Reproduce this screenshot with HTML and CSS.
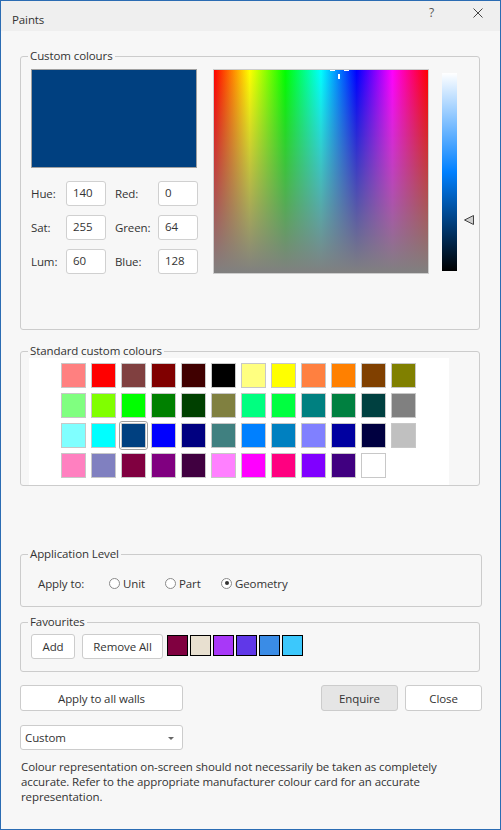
FILE: index.html
```html
<!DOCTYPE html>
<html>
<head>
    <title>Paints</title>
    <link rel="stylesheet" href="styles.css">
</head>
<body>
<div class="window">
    <div class="titlebar">
        <span class="title">Paints</span>
        <span class="caption-help">?</span>
        <span class="caption-close">
            <svg width="10" height="10" viewBox="0 0 10 10"><path d="M0.5 0.5 L9.5 9.5 M9.5 0.5 L0.5 9.5" stroke="#444" stroke-width="1" fill="none"/></svg>
        </span>
    </div>

    <div class="content">
        <fieldset class="group">
            <legend>Custom colours</legend>
            <div class="custom-body">
                <div class="custom-left">
                    <div class="preview"></div>
                    <div class="fields">
                        <label>Hue:</label><input class="num" value="140">
                        <label class="lbl2">Red:</label><input class="num" value="0">
                        <label>Sat:</label><input class="num" value="255">
                        <label class="lbl2">Green:</label><input class="num" value="64">
                        <label>Lum:</label><input class="num" value="60">
                        <label class="lbl2">Blue:</label><input class="num" value="128">
                    </div>
                </div>
                <div class="spectrum">
                    <span class="cross cross-l"></span>
                    <span class="cross cross-r"></span>
                    <span class="cross cross-v"></span>
                </div>
                <div class="lum"></div>
                <div class="lum-arrow">
                    <svg width="11" height="11" viewBox="0 0 11 11"><polygon points="0.5,5 9.5,0.5 9.5,9.5" fill="#cfcfcf" stroke="#444" stroke-width="1"/></svg>
                </div>
            </div>
        </fieldset>

        <fieldset class="group std-group">
            <legend>Standard custom colours</legend>
            <div class="std-panel">
                <div class="swatch-grid">
                    <span class="swatch" style="background:#ff8080"></span>
                    <span class="swatch" style="background:#ff0000"></span>
                    <span class="swatch" style="background:#804040"></span>
                    <span class="swatch" style="background:#800000"></span>
                    <span class="swatch" style="background:#400000"></span>
                    <span class="swatch" style="background:#000000"></span>
                    <span class="swatch" style="background:#ffff80"></span>
                    <span class="swatch" style="background:#ffff00"></span>
                    <span class="swatch" style="background:#ff8040"></span>
                    <span class="swatch" style="background:#ff8000"></span>
                    <span class="swatch" style="background:#804000"></span>
                    <span class="swatch" style="background:#808000"></span>

                    <span class="swatch" style="background:#80ff80"></span>
                    <span class="swatch" style="background:#80ff00"></span>
                    <span class="swatch" style="background:#00ff00"></span>
                    <span class="swatch" style="background:#008000"></span>
                    <span class="swatch" style="background:#004000"></span>
                    <span class="swatch" style="background:#808040"></span>
                    <span class="swatch" style="background:#00ff80"></span>
                    <span class="swatch" style="background:#00ff40"></span>
                    <span class="swatch" style="background:#008080"></span>
                    <span class="swatch" style="background:#008040"></span>
                    <span class="swatch" style="background:#004040"></span>
                    <span class="swatch" style="background:#808080"></span>

                    <span class="swatch" style="background:#80ffff"></span>
                    <span class="swatch" style="background:#00ffff"></span>
                    <span class="swatch selected" style="background:#004080"></span>
                    <span class="swatch" style="background:#0000ff"></span>
                    <span class="swatch" style="background:#000080"></span>
                    <span class="swatch" style="background:#408080"></span>
                    <span class="swatch" style="background:#0080ff"></span>
                    <span class="swatch" style="background:#0080c0"></span>
                    <span class="swatch" style="background:#8080ff"></span>
                    <span class="swatch" style="background:#0000a0"></span>
                    <span class="swatch" style="background:#000040"></span>
                    <span class="swatch" style="background:#c0c0c0"></span>

                    <span class="swatch" style="background:#ff80c0"></span>
                    <span class="swatch" style="background:#8080c0"></span>
                    <span class="swatch" style="background:#800040"></span>
                    <span class="swatch" style="background:#800080"></span>
                    <span class="swatch" style="background:#400040"></span>
                    <span class="swatch" style="background:#ff80ff"></span>
                    <span class="swatch" style="background:#ff00ff"></span>
                    <span class="swatch" style="background:#ff0080"></span>
                    <span class="swatch" style="background:#8000ff"></span>
                    <span class="swatch" style="background:#400080"></span>
                    <span class="swatch" style="background:#ffffff"></span>
                </div>
            </div>
        </fieldset>

        <fieldset class="group app-group">
            <legend>Application Level</legend>
            <div class="app-body">
                <span class="apply-label">Apply to:</span>
                <span class="radio-opt"><span class="radio"></span>Unit</span>
                <span class="radio-opt"><span class="radio"></span>Part</span>
                <span class="radio-opt"><span class="radio checked"></span>Geometry</span>
            </div>
        </fieldset>

        <fieldset class="group fav-group">
            <legend>Favourites</legend>
            <div class="fav-body">
                <button class="btn btn-add">Add</button>
                <button class="btn btn-remove">Remove All</button>
                <div class="fav-swatches">
                    <span class="fav" style="background:#800040"></span>
                    <span class="fav" style="background:#e8e0d0"></span>
                    <span class="fav" style="background:#a838f8"></span>
                    <span class="fav" style="background:#6038e8"></span>
                    <span class="fav" style="background:#3a8ce6"></span>
                    <span class="fav" style="background:#3cc8fc"></span>
                </div>
            </div>
        </fieldset>

        <div class="actions">
            <button class="btn btn-walls">Apply to all walls</button>
            <button class="btn btn-enquire">Enquire</button>
            <button class="btn btn-close">Close</button>
        </div>

        <div class="dropdown">
            <span>Custom</span>
            <span class="dd-arrow"></span>
        </div>

        <p class="note">Colour representation on-screen should not necessarily be taken as completely accurate. Refer to the appropriate manufacturer colour card for an accurate representation.</p>
    </div>
</div>
</body>
</html>
```

FILE: styles.css
```css
body{
    margin: 0;
    font-family: "Segoe UI", "Open Sans", sans-serif;
    font-size: 11.5px;
    letter-spacing: -0.1px;
    color: #333;
}

.window{
    width: 501px;
    height: 830px;
    box-sizing: border-box;
    border: 1px solid #2b6cb3;
    background-color: #f7f7f7;
}

.titlebar{
    height: 30px;
    display: flex;
    background-color: #efefef;
}
.title{
    padding: 11px 0 0 11px;
    line-height: 16px;
}
.caption-help{
    margin-left: auto;
    padding-top: 4px;
    line-height: 16px;
    font-size: 12px;
    color: #555;
}
.caption-close{
    margin: 7px 17px 0 39px;
    height: 10px;
}
.caption-close svg{
    display: block;
}

.content{
    padding: 0 18px 0 19px;
}

.group{
    margin: 18px 2px 0 0;
    padding: 0;
    min-width: 0;
    border: 1px solid #cccccc;
    border-radius: 3px;
}
.group legend{
    margin-left: 7px;
    padding: 0 2px;
    line-height: 14px;
}

/* custom colours */
.custom-body{
    display: flex;
    align-items: flex-start;
    padding: 6px 0 55px 10px;
}
.custom-left{
    width: 167px;
}
.preview{
    width: 166px;
    height: 99px;
    box-sizing: border-box;
    border: 1px solid #a0a0a0;
    background-color: #004080;
}
.fields{
    display: grid;
    grid-template-columns: 35px 40px 52px 40px;
    grid-auto-rows: 25px;
    row-gap: 9px;
    margin-top: 13px;
    align-items: center;
}
.lbl2{
    padding-left: 9px;
}
.num{
    width: 40px;
    height: 25px;
    box-sizing: border-box;
    margin: 0;
    padding: 0 0 2px 6px;
    border: 1px solid #d0d0d0;
    border-radius: 3px;
    background-color: #fff;
    font-family: inherit;
    font-size: 11.5px;
    letter-spacing: -0.1px;
    color: #333;
}

.spectrum{
    position: relative;
    width: 216px;
    height: 205px;
    box-sizing: border-box;
    margin-left: 15px;
    border: 1px solid #cccccc;
    background: linear-gradient(to bottom, rgba(128,128,128,0), #808080),
                linear-gradient(to right, #ff0000, #ffff00, #00ff00, #00ffff, #0000ff, #ff00ff, #ff0000);
}
.cross{
    position: absolute;
    background-color: #fff;
}
.cross-l{ left: 116px; top: 0; width: 5px; height: 1px; }
.cross-r{ left: 130px; top: 0; width: 5px; height: 1px; }
.cross-v{ left: 124px; top: 4px; width: 2px; height: 5px; }

.lum{
    width: 15px;
    height: 198px;
    margin: 4px 0 0 13px;
    background: linear-gradient(to bottom, #ffffff, #0080ff, #000000);
}
.lum-arrow{
    margin: 146px 0 0 7px;
}
.lum-arrow svg{
    display: block;
}

/* standard colours */
.std-group{
    margin-top: 14px;
}
.std-panel{
    width: 420px;
    box-sizing: border-box;
    margin-left: 8px;
    padding: 5px 0 7px 32px;
    background-color: #fff;
}
.swatch-grid{
    display: grid;
    grid-template-columns: repeat(12, 25px);
    grid-auto-rows: 25px;
    gap: 5px;
}
.swatch{
    position: relative;
    box-sizing: border-box;
    border: 1px solid #c8c8c8;
}
.swatch.selected::after{
    content: "";
    position: absolute;
    left: -3px;
    top: -3px;
    right: -3px;
    bottom: -3px;
    border: 1px solid #a0a0a0;
    border-radius: 3px;
}

/* application level */
.app-group{
    margin: 61px 0 0 0;
}
.app-body{
    display: flex;
    align-items: center;
    height: 16px;
    padding: 14px 0 15px 17px;
}
.apply-label{
    width: 71px;
}
.radio-opt{
    display: flex;
    align-items: center;
    width: 56px;
    white-space: nowrap;
}
.radio{
    flex-shrink: 0;
    width: 11px;
    height: 11px;
    box-sizing: border-box;
    margin-right: 3px;
    border: 1px solid #8a8a8a;
    border-radius: 50%;
    background-color: #fff;
    position: relative;
}
.radio.checked::after{
    content: "";
    position: absolute;
    left: 2.5px;
    top: 2.5px;
    width: 4px;
    height: 4px;
    border-radius: 50%;
    background-color: #333;
}

/* favourites */
.fav-group{
    margin-top: 8px;
}
.fav-body{
    display: flex;
    align-items: flex-start;
    padding: 5px 0 12px 10px;
}
.btn{
    height: 25px;
    box-sizing: border-box;
    margin: 0;
    padding: 0;
    border: 1px solid #cccccc;
    border-radius: 3px;
    background-color: #fff;
    font-family: inherit;
    font-size: 11.5px;
    letter-spacing: -0.1px;
    color: #333;
}
.btn-add{
    width: 44px;
}
.btn-remove{
    width: 81px;
    margin-left: 7px;
}
.fav-swatches{
    display: flex;
    gap: 2px;
    margin: 1px 0 0 4px;
}
.fav{
    width: 21px;
    height: 21px;
    box-sizing: border-box;
    border: 1px solid #000;
}

/* bottom */
.actions{
    display: flex;
    margin-top: 13px;
}
.actions .btn{
    height: 26px;
}
.btn-walls{
    width: 163px;
}
.btn-enquire{
    width: 77px;
    margin-left: auto;
    background-color: #e5e5e5;
}
.btn-close{
    width: 77px;
    margin-left: 7px;
}

.dropdown{
    display: flex;
    align-items: center;
    width: 163px;
    height: 25px;
    box-sizing: border-box;
    margin-top: 14px;
    padding-left: 4px;
    border: 1px solid #cccccc;
    border-radius: 3px;
    background-color: #fff;
}
.dd-arrow{
    margin: 1px 8px 0 auto;
    width: 0;
    height: 0;
    border-left: 3px solid transparent;
    border-right: 3px solid transparent;
    border-top: 3px solid #666;
}

.note{
    margin: 9px 0 0 1px;
    line-height: 15px;
}
```
